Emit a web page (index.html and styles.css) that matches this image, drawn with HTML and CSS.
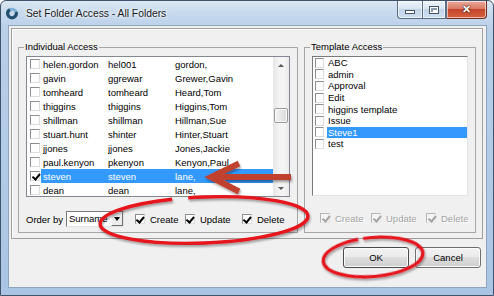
FILE: index.html
```html
<!DOCTYPE html>
<html lang="en">
  <head>
    <meta charset="UTF-8" />
    <title>Set Folder Access - All Folders</title>
    <link rel="stylesheet" href="styles.css">
  </head>
  <body>
    <div class="window">
      <div class="titlebar">
        <svg class="app-icon" viewBox="0 0 12 13">
          <circle cx="6" cy="6.5" r="4.3" fill="none" stroke="#7fb0d6" stroke-width="3" />
          <circle cx="6" cy="6.5" r="4.3" fill="none" stroke="#24506f" stroke-width="3.2" stroke-dasharray="19 8" transform="rotate(-20 6 6.5)" />
        </svg>
        <span class="title">Set Folder Access - All Folders</span>
        <div class="caption">
          <span class="cap min"><i></i></span>
          <span class="cap max"><i></i></span>
          <span class="cap close">&#x2715;</span>
        </div>
      </div>

      <div class="client">
        <div class="panel">
          <fieldset class="group individual">
            <legend>Individual Access</legend>
            <div class="listbox users">
              <div class="rows">
                <div class="row"><span class="cb"></span><span class="item"><span class="c1">helen.gordon</span><span class="c2">hel001</span><span>gordon,</span></span></div>
                <div class="row"><span class="cb"></span><span class="item"><span class="c1">gavin</span><span class="c2">ggrewar</span><span>Grewer,Gavin</span></span></div>
                <div class="row"><span class="cb"></span><span class="item"><span class="c1">tomheard</span><span class="c2">tomheard</span><span>Heard,Tom</span></span></div>
                <div class="row"><span class="cb"></span><span class="item"><span class="c1">thiggins</span><span class="c2">thiggins</span><span>Higgins,Tom</span></span></div>
                <div class="row"><span class="cb"></span><span class="item"><span class="c1">shillman</span><span class="c2">shillman</span><span>Hillman,Sue</span></span></div>
                <div class="row"><span class="cb"></span><span class="item"><span class="c1">stuart.hunt</span><span class="c2">shinter</span><span>Hinter,Stuart</span></span></div>
                <div class="row"><span class="cb"></span><span class="item"><span class="c1">jjones</span><span class="c2">jjones</span><span>Jones,Jackie</span></span></div>
                <div class="row"><span class="cb"></span><span class="item"><span class="c1">paul.kenyon</span><span class="c2">pkenyon</span><span>Kenyon,Paul</span></span></div>
                <div class="row selected"><span class="cb checked"></span><span class="item"><span class="c1">steven</span><span class="c2">steven</span><span>lane,</span></span></div>
                <div class="row"><span class="cb"></span><span class="item"><span class="c1">dean</span><span class="c2">dean</span><span>lane,</span></span></div>
              </div>
              <div class="scrollbar">
                <span class="sb-btn"><i class="arrow-up"></i></span>
                <span class="sb-track"><span class="thumb"></span></span>
                <span class="sb-btn"><i class="arrow-down"></i></span>
              </div>
            </div>
            <div class="controls">
              <span class="order-lbl">Order by</span>
              <div class="combo">
                <span class="combo-text">Surname</span>
                <span class="combo-btn"><i class="arrow-down dark"></i></span>
              </div>
              <div class="opts user-opts">
                <label class="opt"><span class="cb checked"></span>Create</label>
                <label class="opt"><span class="cb checked"></span>Update</label>
                <label class="opt"><span class="cb checked"></span>Delete</label>
              </div>
            </div>
          </fieldset>

          <fieldset class="group template">
            <legend>Template Access</legend>
            <div class="listbox templates">
              <div class="trow"><span class="cb"></span><span class="item">ABC</span></div>
              <div class="trow"><span class="cb"></span><span class="item">admin</span></div>
              <div class="trow"><span class="cb"></span><span class="item">Approval</span></div>
              <div class="trow"><span class="cb"></span><span class="item">Edit</span></div>
              <div class="trow"><span class="cb"></span><span class="item">higgins template</span></div>
              <div class="trow"><span class="cb"></span><span class="item">Issue</span></div>
              <div class="trow selected"><span class="cb"></span><span class="item">Steve1</span></div>
              <div class="trow"><span class="cb"></span><span class="item">test</span></div>
            </div>
            <div class="controls">
              <div class="opts tpl-opts">
                <label class="opt disabled"><span class="cb checked"></span>Create</label>
                <label class="opt disabled"><span class="cb checked"></span>Update</label>
                <label class="opt disabled"><span class="cb checked"></span>Delete</label>
              </div>
            </div>
          </fieldset>
        </div>

        <div class="buttons">
          <button class="btn default">OK</button>
          <button class="btn">Cancel</button>
        </div>
      </div>

      <!-- annotations drawn on top of the screenshot -->
      <svg class="marks" width="494" height="296" viewBox="0 0 494 296">
        <defs>
          <filter id="shade" x="-10%" y="-30%" width="125%" height="170%">
            <feDropShadow dx="1" dy="2" stdDeviation="1.3" flood-color="#000" flood-opacity="0.35" />
          </filter>
        </defs>
        <g filter="url(#shade)" fill="none">
          <ellipse cx="204" cy="220" rx="104" ry="23" transform="rotate(-2.2 204 220)" stroke="#e5121b" stroke-width="3.4" stroke-dasharray="299 16 200" />
          <ellipse cx="373" cy="257" rx="50" ry="19.5" transform="rotate(-5 373 257)" stroke="#e5121b" stroke-width="3.2" stroke-dasharray="158 5 100" />
          <g stroke="#c0432f" stroke-width="6">
            <line x1="214" y1="177" x2="291" y2="177" />
            <polyline points="239,163.5 211,177 239,191.5" />
          </g>
        </g>
      </svg>
    </div>
  </body>
</html>
```

FILE: styles.css
```css
* {
  box-sizing: border-box;
}

body {
  margin: 0;
  width: 494px;
  height: 296px;
  overflow: hidden;
  font-family: "Liberation Sans", Arial, sans-serif;
  font-size: 9.5px;
  color: #000;
  background: #fff;
}

.window {
  position: relative;
  width: 494px;
  height: 296px;
  border: 1px solid #3f536b;
  border-radius: 6px 6px 0 0;
  background: linear-gradient(180deg, #dce8f4 0, #c9dbee 10px, #b8cfe8 30px, #aac5e4 100%);
  display: flex;
  flex-direction: column;
}

/* title bar */
.titlebar {
  height: 24px;
  display: flex;
  align-items: center;
  padding-left: 5px;
}

.app-icon {
  width: 12px;
  height: 13px;
  margin-right: 8px;
}

.title {
  font-size: 10.3px;
  color: #1a1a1a;
  text-shadow: 0 0 5px #fff, 0 0 3px #fff;
}

.caption {
  margin-left: auto;
  margin-right: 6px;
  align-self: flex-start;
  display: flex;
}

.cap {
  height: 18px;
  border: 1px solid #5a6d85;
  border-top: none;
  display: flex;
  align-items: center;
  justify-content: center;
  box-shadow: inset 0 0 0 1px rgba(255, 255, 255, 0.6);
  background: linear-gradient(180deg, #eef4fa 0, #d9e5f1 45%, #c2d4e7 50%, #cddff1 100%);
}

.min {
  width: 25px;
  border-right: none;
  border-bottom-left-radius: 4px;
}

.min i {
  width: 10px;
  height: 4px;
  margin-top: 5px;
  background: #fff;
  border: 1px solid #45566b;
}

.max {
  width: 24px;
}

.max i {
  width: 10px;
  height: 8px;
  border: 1px solid #45566b;
  background: #fff;
  box-shadow: inset 0 0 0 1px #fff, inset 2px 2px 0 1px #8a9bb0;
}

.close {
  width: 41px;
  border-color: #6e2a20;
  border-left: 1px solid #5a6d85;
  border-bottom-right-radius: 4px;
  color: #fff;
  font-size: 11px;
  font-weight: bold;
  text-shadow: 0 0 1px #3a0d05, 0 0 2px #3a0d05;
  background: linear-gradient(180deg, #ebab9d 0, #d97b66 45%, #c5452c 50%, #d5613f 100%);
}

/* client area */
.client {
  flex: 1;
  margin: 0 6px 7px 7px;
  border: 1px solid #8ea5bd;
  background: #f0f0f0;
  display: flex;
  flex-direction: column;
}

.panel {
  height: 211px;
  margin: 2px 3px 0 2px;
  border: 1px solid #a0a0a0;
  box-shadow: inset 1px 1px 0 #fff;
  padding: 12px 0 0 6px;
  display: flex;
  gap: 6px;
  align-items: flex-start;
}

.group {
  margin: 0;
  min-width: 0;
  height: 192px;
  border: 1px solid #a6a6a6;
  padding: 0 7px 5px 7px;
}

.group legend {
  padding: 0 1px;
  margin-left: -2px;
  line-height: 12px;
}

.individual {
  width: 280px;
}

.template {
  width: 172px;
}

.listbox {
  background: #fff;
}

.users {
  margin-top: 3px;
  height: 141px;
  border: 1px solid #828790;
  display: flex;
}

.rows {
  flex: 1;
  overflow: hidden;
}

.row {
  height: 14px;
  display: flex;
  align-items: center;
}

.row .cb {
  margin: 0 1px 0 3px;
}

.item {
  flex: 1;
  height: 100%;
  display: flex;
  align-items: center;
  padding-left: 2px;
  white-space: nowrap;
}

.c1 {
  width: 65px;
}

.c2 {
  width: 67px;
}

.selected .item {
  background: #3399ff;
  color: #fff;
}

/* checkboxes */
.cb {
  position: relative;
  flex: none;
  width: 10px;
  height: 10px;
  background: #fff;
  border: 1px solid;
  border-color: #8d8d8d #dcdcdc #dcdcdc #8d8d8d;
}

.cb.checked::after {
  content: "";
  position: absolute;
  left: 2.5px;
  top: 0;
  width: 2.5px;
  height: 5.5px;
  border: solid #000;
  border-width: 0 2px 2px 0;
  transform: rotate(40deg);
}

/* scrollbar */
.scrollbar {
  width: 16px;
  display: flex;
  flex-direction: column;
  background: linear-gradient(90deg, #e6e6e6, #f4f4f4 40%, #f4f4f4 70%, #e9e9e9);
}

.sb-btn {
  height: 16px;
  display: flex;
  align-items: center;
  justify-content: center;
}

.sb-track {
  flex: 1;
}

.thumb {
  display: block;
  height: 15px;
  margin: 35px 1px 0 1px;
  border: 1px solid #9a9a9a;
  border-radius: 2px;
  background: linear-gradient(90deg, #f3f3f3, #e6e6e6 50%, #d9d9d9);
  box-shadow: inset 0 0 0 1px #fafafa;
}

.arrow-up,
.arrow-down {
  width: 0;
  height: 0;
  border-left: 3.5px solid transparent;
  border-right: 3.5px solid transparent;
}

.arrow-up {
  border-bottom: 3px solid #5a5a5a;
}

.arrow-down {
  border-top: 3px solid #5a5a5a;
}

.arrow-down.dark {
  border-top: 4px solid #000;
}

/* order by row */
.controls {
  height: 16px;
  margin-top: 14px;
  display: flex;
  align-items: center;
}

.order-lbl {
  margin-right: 3px;
}

.combo {
  width: 58px;
  height: 16px;
  display: flex;
  background: #fff;
  border: 1px solid;
  border-color: #7a7a7a #e3e3e3 #e3e3e3 #7a7a7a;
}

.combo-text {
  flex: 1;
  overflow: hidden;
  white-space: nowrap;
  padding: 1px 0 0 2px;
}

.combo-btn {
  width: 12px;
  display: flex;
  align-items: center;
  justify-content: center;
  background: #ececec;
  border: 1px solid;
  border-color: #fff #6f6f6f #6f6f6f #fff;
}

.opts {
  display: grid;
}

.user-opts {
  margin-left: 11px;
  grid-template-columns: 50px 57px auto;
}

.tpl-opts {
  margin-left: 8px;
  grid-template-columns: 51px 55px auto;
}

.opt {
  display: flex;
  align-items: center;
  gap: 5px;
}

.opt.disabled {
  color: #a3a3a3;
  text-shadow: 1px 1px 0 #fff;
}

.opt.disabled .cb {
  background: #f4f4f4;
  border-color: #b5b5b5 #e6e6e6 #e6e6e6 #b5b5b5;
}

.opt.disabled .cb::after {
  border-color: #a3a3a3;
}

/* template list */
.templates {
  margin-top: 3px;
  height: 140px;
  border: 1px solid;
  border-color: #7a7a7a #e3e3e3 #e3e3e3 #7a7a7a;
}

.template .controls {
  margin-top: 14px;
}

.trow {
  height: 11.6px;
  display: flex;
  align-items: center;
}

.trow .cb {
  width: 9px;
  margin: 0 3px 0 2px;
}

.trow .item {
  padding-left: 1px;
}

/* dialog buttons */
.buttons {
  display: flex;
  justify-content: flex-end;
  gap: 6px;
  margin-top: 8px;
  padding-right: 5px;
}

.btn {
  width: 66px;
  height: 21px;
  font-family: inherit;
  font-size: 9.5px;
  color: #000;
  border: 1px solid #707070;
  border-radius: 3px;
  background: linear-gradient(180deg, #f2f2f2 0, #ebebeb 48%, #dddddd 50%, #cfcfcf 100%);
  box-shadow: inset 0 0 0 1px #fbfbfb;
}

.btn.default {
  border-color: #4a4a4a;
}

.marks {
  position: absolute;
  left: -1px;
  top: -1px;
  pointer-events: none;
}
```
